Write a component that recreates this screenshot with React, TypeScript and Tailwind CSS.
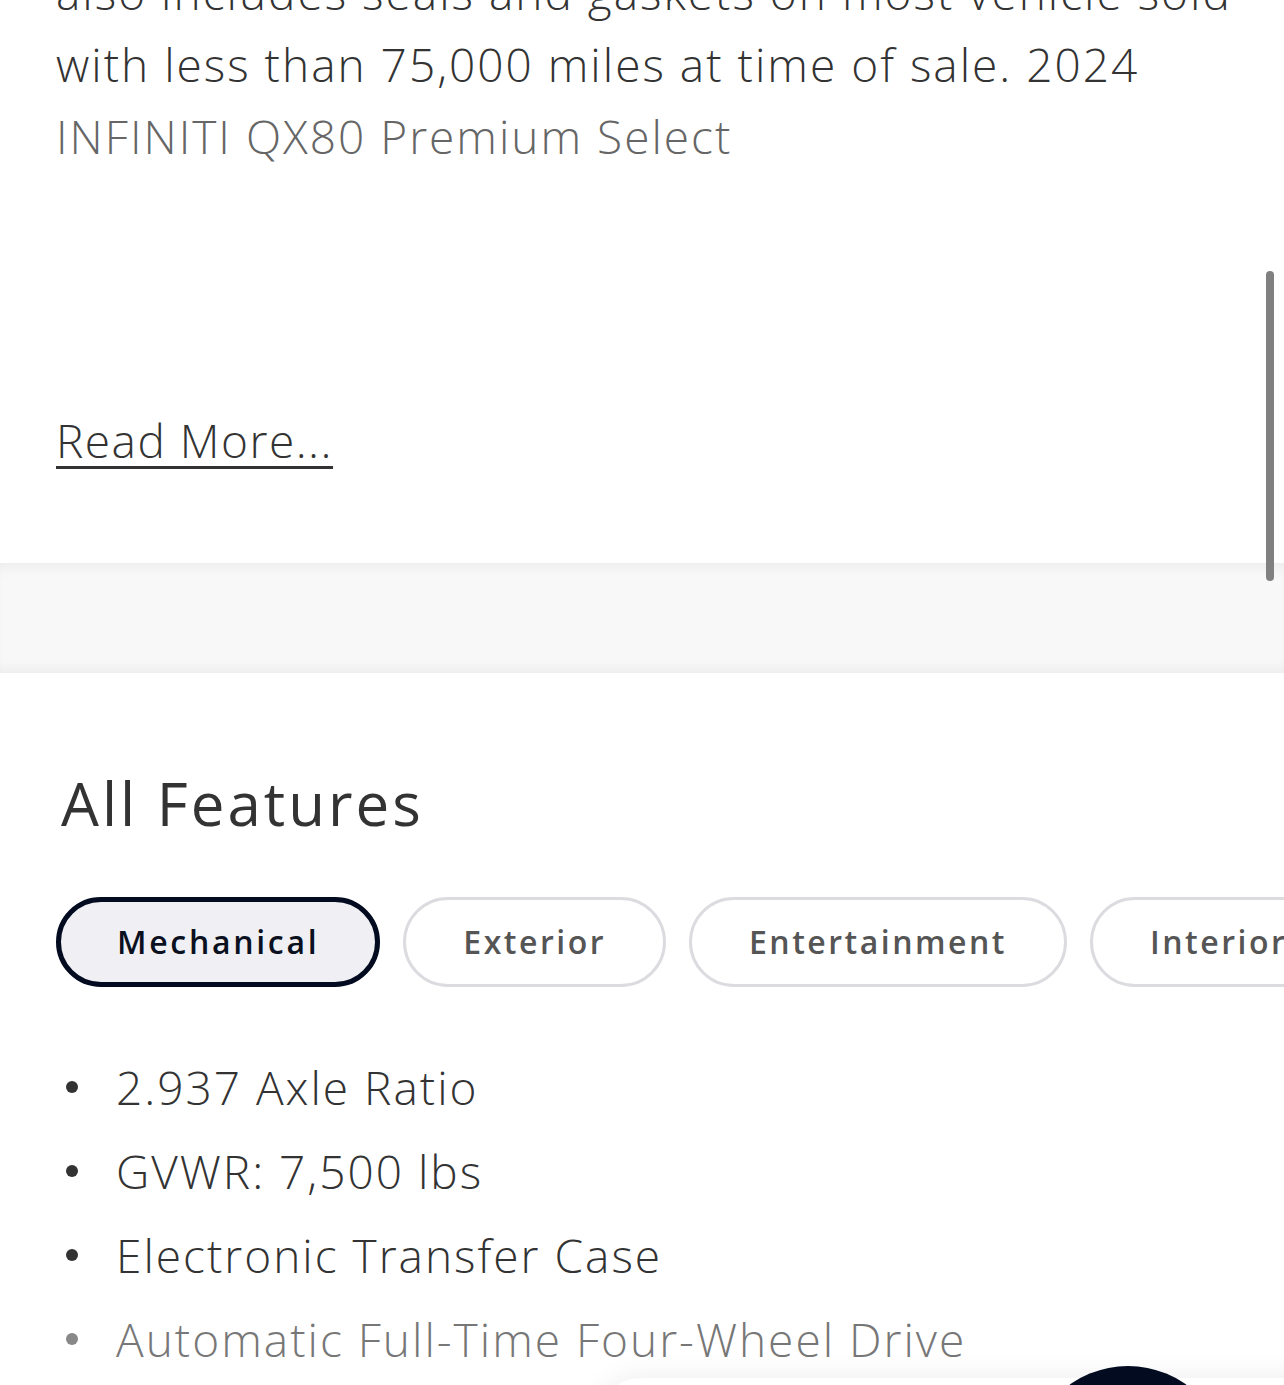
import React from "react";

const tabs = [
  { label: "Mechanical", active: true },
  { label: "Exterior", active: false },
  { label: "Entertainment", active: false },
  { label: "Interior", active: false },
];

const items = [
  { text: "2.937 Axle Ratio", faded: false },
  { text: "GVWR: 7,500 lbs", faded: false },
  { text: "Electronic Transfer Case", faded: false },
  { text: "Automatic Full-Time Four-Wheel Drive", faded: true },
];

export default function App() {
  return (
    <div className="relative h-[1385px] w-full overflow-hidden bg-white font-['Open_Sans','Noto_Sans',sans-serif] text-[#333]">
      {/* Description section */}
      <section className="flex h-[563px] flex-col px-[56px]">
        <div className="-mt-[44px] text-[46px] font-light leading-[72px] tracking-[2px]">
          <span className="block whitespace-nowrap">also includes seals and gaskets on most vehicle sold</span>
          <span className="block whitespace-nowrap">with less than 75,000 miles at time of sale. 2024</span>
          <span className="block whitespace-nowrap text-[#666]">INFINITI QX80 Premium Select</span>
        </div>
        <div className="mt-[232px] text-[46px] font-light leading-[72px] tracking-[1.5px]">
          <a className="underline decoration-[3px] underline-offset-[8px]" href="#">
            Read More...
          </a>
        </div>
      </section>

      {/* Separator band */}
      <div className="h-[110px] bg-[#f8f8f8] shadow-[inset_0_12px_14px_-8px_rgba(0,0,0,0.05),inset_0_-12px_14px_-8px_rgba(0,0,0,0.05)]" />

      {/* All Features */}
      <section className="flex flex-col pt-[100px] pl-[56px]">
        <h2 className="ml-[5px] text-[60px] leading-[60px] font-normal tracking-[3px] text-[#333]">All Features</h2>

        <div className="mt-[64px] flex gap-[23px] overflow-hidden">
          {tabs.map((t) => (
            <button
              key={t.label}
              className={
                t.active
                  ? "h-[90px] shrink-0 whitespace-nowrap rounded-full border-[5px] border-[#020b1f] bg-[#f0f0f4] px-[56px] text-[32px] font-semibold tracking-[2.7px] text-[#0a1020]"
                  : "h-[90px] shrink-0 whitespace-nowrap rounded-full border-[3px] border-[#dcdce0] bg-white px-[57px] text-[32px] font-semibold tracking-[2.5px] text-[#555]"
              }
            >
              {t.label}
            </button>
          ))}
        </div>

        <ul className="mt-[58px]">
          {items.map((it) => (
            <li
              key={it.text}
              className={`flex h-[84px] items-center text-[46px] font-light tracking-[2px] ${it.faded ? "text-[#777]" : "text-[#333]"}`}
            >
              <span
                className={`ml-[10px] mr-[38px] h-[12px] w-[12px] shrink-0 rounded-full ${it.faded ? "bg-[#888]" : "bg-[#333]"}`}
              />
              <span className="whitespace-nowrap">{it.text}</span>
            </li>
          ))}
        </ul>
      </section>

      {/* Scrollbar */}
      <div className="absolute left-[1266px] top-[271px] h-[310px] w-[8px] rounded-full bg-[#808080]" />

      {/* Floating bar shadow + chat button */}
      <div className="absolute left-[600px] top-[1378px] h-[80px] w-[760px] rounded-[40px] bg-white shadow-[0_0_30px_rgba(0,0,0,0.08)]" />
      <div className="absolute left-[1028px] top-[1366px] h-[200px] w-[200px] rounded-full bg-[#020b1f]" />
    </div>
  );
}
